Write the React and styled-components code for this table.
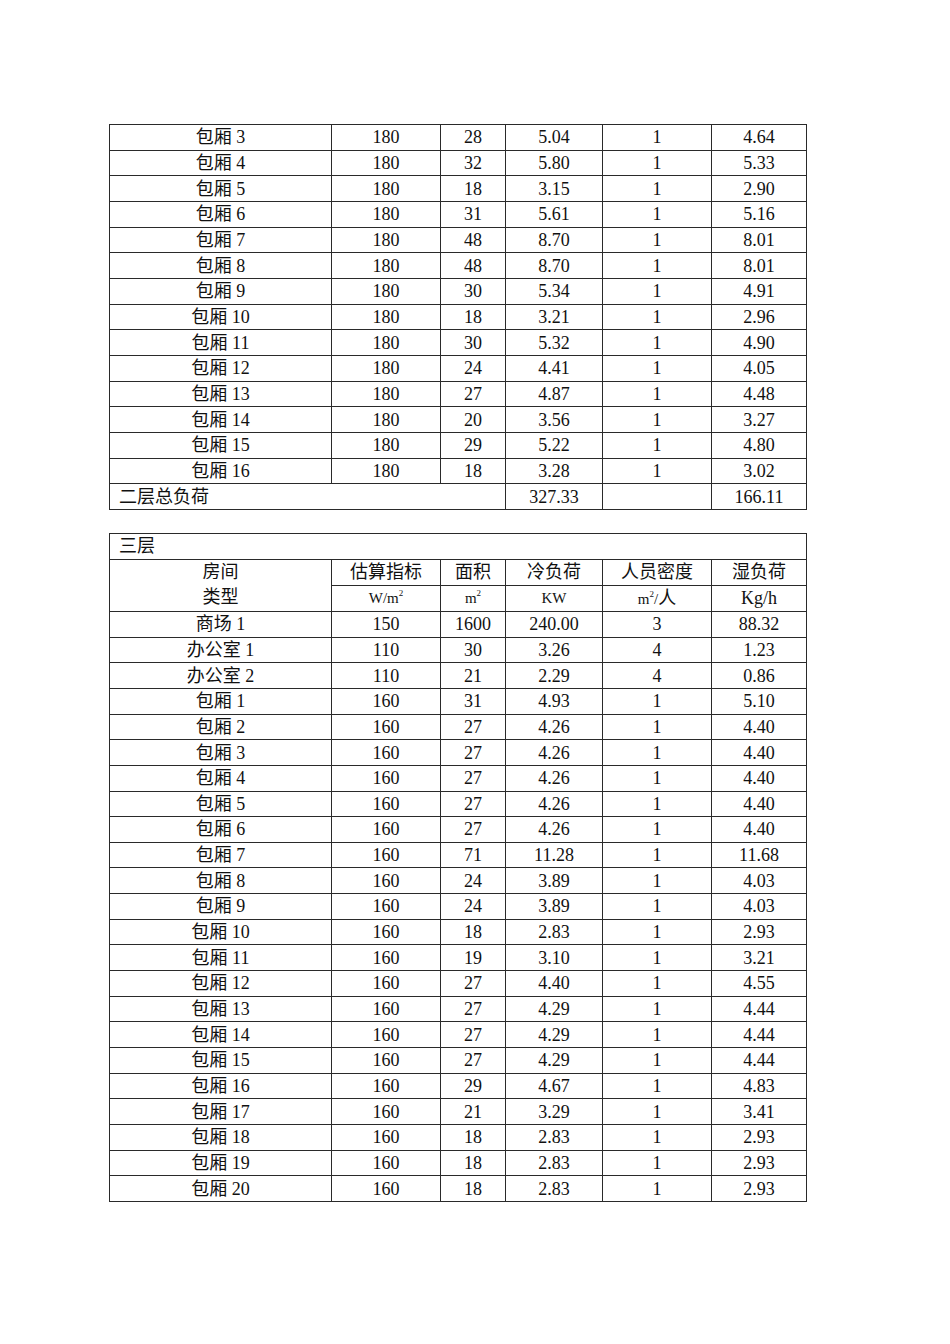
import React from 'react';
import styled, { createGlobalStyle } from 'styled-components';

const GlobalStyle = createGlobalStyle`
  body {
    margin: 0;
    background: #ffffff;
    font-family: "Liberation Serif", "Noto Sans CJK SC", serif;
    color: #111111;
  }
`;

const Page = styled.div`
  width: 950px;
  min-height: 1344px;
  padding: 124px 0 0 109px;
  box-sizing: border-box;
  display: flex;
  flex-direction: column;
  gap: 23px;
`;

const Table = styled.table`
  width: 697px;
  border-collapse: collapse;
  table-layout: fixed;
  font-size: 18px;
  line-height: 1;
`;

const Cell = styled.td`
  height: 24.66px;
  padding: 0;
  border: 1px solid #2a2a2a;
  text-align: ${({ $left }) => ($left ? 'left' : 'center')};
  padding-left: ${({ $left }) => ($left ? '9px' : '0')};
  vertical-align: middle;
  white-space: nowrap;
  font-size: ${({ $small }) => ($small ? '15px' : '18px')};
`;

const Sup = styled.sup`
  font-size: 9px;
  vertical-align: 7px;
  line-height: 0;
`;

const Han = styled.span`
  font-size: 18px;
`;

const cols = [222, 109, 65, 97, 109, 95];

const Cols = () => (
  <colgroup>
    {cols.map((w, i) => (
      <col key={i} style={{ width: w }} />
    ))}
  </colgroup>
);

const floor2 = [
  ['包厢 3', '180', '28', '5.04', '1', '4.64'],
  ['包厢 4', '180', '32', '5.80', '1', '5.33'],
  ['包厢 5', '180', '18', '3.15', '1', '2.90'],
  ['包厢 6', '180', '31', '5.61', '1', '5.16'],
  ['包厢 7', '180', '48', '8.70', '1', '8.01'],
  ['包厢 8', '180', '48', '8.70', '1', '8.01'],
  ['包厢 9', '180', '30', '5.34', '1', '4.91'],
  ['包厢 10', '180', '18', '3.21', '1', '2.96'],
  ['包厢 11', '180', '30', '5.32', '1', '4.90'],
  ['包厢 12', '180', '24', '4.41', '1', '4.05'],
  ['包厢 13', '180', '27', '4.87', '1', '4.48'],
  ['包厢 14', '180', '20', '3.56', '1', '3.27'],
  ['包厢 15', '180', '29', '5.22', '1', '4.80'],
  ['包厢 16', '180', '18', '3.28', '1', '3.02'],
];

const floor3 = [
  ['商场 1', '150', '1600', '240.00', '3', '88.32'],
  ['办公室 1', '110', '30', '3.26', '4', '1.23'],
  ['办公室 2', '110', '21', '2.29', '4', '0.86'],
  ['包厢 1', '160', '31', '4.93', '1', '5.10'],
  ['包厢 2', '160', '27', '4.26', '1', '4.40'],
  ['包厢 3', '160', '27', '4.26', '1', '4.40'],
  ['包厢 4', '160', '27', '4.26', '1', '4.40'],
  ['包厢 5', '160', '27', '4.26', '1', '4.40'],
  ['包厢 6', '160', '27', '4.26', '1', '4.40'],
  ['包厢 7', '160', '71', '11.28', '1', '11.68'],
  ['包厢 8', '160', '24', '3.89', '1', '4.03'],
  ['包厢 9', '160', '24', '3.89', '1', '4.03'],
  ['包厢 10', '160', '18', '2.83', '1', '2.93'],
  ['包厢 11', '160', '19', '3.10', '1', '3.21'],
  ['包厢 12', '160', '27', '4.40', '1', '4.55'],
  ['包厢 13', '160', '27', '4.29', '1', '4.44'],
  ['包厢 14', '160', '27', '4.29', '1', '4.44'],
  ['包厢 15', '160', '27', '4.29', '1', '4.44'],
  ['包厢 16', '160', '29', '4.67', '1', '4.83'],
  ['包厢 17', '160', '21', '3.29', '1', '3.41'],
  ['包厢 18', '160', '18', '2.83', '1', '2.93'],
  ['包厢 19', '160', '18', '2.83', '1', '2.93'],
  ['包厢 20', '160', '18', '2.83', '1', '2.93'],
];

const Rows = ({ data }) =>
  data.map((row, i) => (
    <tr key={i}>
      {row.map((v, j) => (
        <Cell key={j}>{v}</Cell>
      ))}
    </tr>
  ));

export default function App() {
  return (
    <>
      <GlobalStyle />
      <Page>
        <Table>
          <Cols />
          <tbody>
            <Rows data={floor2} />
            <tr>
              <Cell colSpan={3} $left>二层总负荷</Cell>
              <Cell>327.33</Cell>
              <Cell />
              <Cell>166.11</Cell>
            </tr>
          </tbody>
        </Table>

        <Table>
          <Cols />
          <tbody>
            <tr>
              <Cell colSpan={6} $left>三层</Cell>
            </tr>
            <tr>
              <Cell rowSpan={2} style={{ lineHeight: '25.7px' }}>
                房间<br />类型
              </Cell>
              <Cell>估算指标</Cell>
              <Cell>面积</Cell>
              <Cell>冷负荷</Cell>
              <Cell>人员密度</Cell>
              <Cell>湿负荷</Cell>
            </tr>
            <tr>
              <Cell $small>W/m<Sup>2</Sup></Cell>
              <Cell $small>m<Sup>2</Sup></Cell>
              <Cell $small>KW</Cell>
              <Cell $small>m<Sup>2</Sup>/<Han>人</Han></Cell>
              <Cell>Kg/h</Cell>
            </tr>
            <Rows data={floor3} />
          </tbody>
        </Table>
      </Page>
    </>
  );
}
